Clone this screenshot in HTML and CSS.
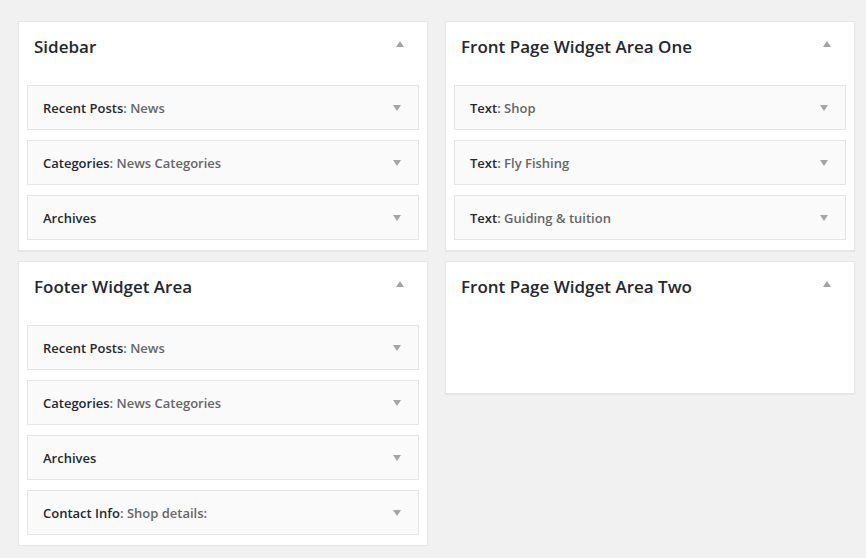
FILE: index.html
```
<!DOCTYPE html>
<html>
<head>
<meta charset="utf-8">
<link rel="stylesheet" href="styles.css">
</head>
<body>
<div class="columns">
  <div class="col">
    <div class="area">
      <div class="area-head"><h2>Sidebar</h2><span class="arrow-up"></span></div>
      <div class="widgets">
        <div class="widget"><h3>Recent Posts<span class="in">: News</span></h3><span class="arrow-down"></span></div>
        <div class="widget"><h3>Categories<span class="in">: News Categories</span></h3><span class="arrow-down"></span></div>
        <div class="widget"><h3>Archives</h3><span class="arrow-down"></span></div>
      </div>
    </div>
    <div class="area">
      <div class="area-head"><h2>Footer Widget Area</h2><span class="arrow-up"></span></div>
      <div class="widgets">
        <div class="widget"><h3>Recent Posts<span class="in">: News</span></h3><span class="arrow-down"></span></div>
        <div class="widget"><h3>Categories<span class="in">: News Categories</span></h3><span class="arrow-down"></span></div>
        <div class="widget"><h3>Archives</h3><span class="arrow-down"></span></div>
        <div class="widget"><h3>Contact Info<span class="in">: Shop details:</span></h3><span class="arrow-down"></span></div>
      </div>
    </div>
  </div>
  <div class="col">
    <div class="area">
      <div class="area-head"><h2>Front Page Widget Area One</h2><span class="arrow-up"></span></div>
      <div class="widgets">
        <div class="widget"><h3>Text<span class="in">: Shop</span></h3><span class="arrow-down"></span></div>
        <div class="widget"><h3>Text<span class="in">: Fly Fishing</span></h3><span class="arrow-down"></span></div>
        <div class="widget"><h3>Text<span class="in">: Guiding &amp; tuition</span></h3><span class="arrow-down"></span></div>
      </div>
    </div>
    <div class="area">
      <div class="area-head"><h2>Front Page Widget Area Two</h2><span class="arrow-up"></span></div>
      <div class="widgets empty"></div>
    </div>
  </div>
</div>
</body>
</html>
```
FILE: styles.css
```
html, body {
  margin: 0;
  background: #f1f1f1;
}
body {
  padding: 21px 0 0 18px;
  font-family: "Open Sans", "Noto Sans", "Liberation Sans", sans-serif;
  color: #23282d;
}
.columns {
  display: flex;
  gap: 17px;
  align-items: flex-start;
}
.col {
  width: 410px;
  display: flex;
  flex-direction: column;
  gap: 10px;
}
.area {
  background: #fff;
  border: 1px solid #e5e5e5;
  box-shadow: 0 1px 1px rgba(0, 0, 0, 0.04);
}
.area-head {
  height: 63px;
  box-sizing: border-box;
  padding: 14px 23px 0 15px;
  display: flex;
  justify-content: space-between;
  align-items: flex-start;
}
.area-head h2 {
  margin: 0;
  font-size: 17px;
  font-weight: 600;
  line-height: 22px;
  color: #23282d;
}
.arrow-up {
  width: 0;
  height: 0;
  margin-top: 5px;
  border-left: 4px solid transparent;
  border-right: 4px solid transparent;
  border-bottom: 6px solid #a0a5aa;
}
.widgets {
  padding: 0 8px 10px;
  display: flex;
  flex-direction: column;
  gap: 10px;
}
.widgets.empty {
  min-height: 58px;
}
.widget {
  height: 45px;
  box-sizing: border-box;
  background: #fafafa;
  border: 1px solid #e5e5e5;
  padding: 0 17px 0 15px;
  display: flex;
  align-items: center;
  justify-content: space-between;
}
.widget h3 {
  margin: 0;
  font-size: 13px;
  font-weight: 600;
  line-height: 18px;
  color: #23282d;
}
.widget .in {
  color: #666;
}
.arrow-down {
  width: 0;
  height: 0;
  border-left: 4px solid transparent;
  border-right: 4px solid transparent;
  border-top: 6px solid #a0a5aa;
}
```
